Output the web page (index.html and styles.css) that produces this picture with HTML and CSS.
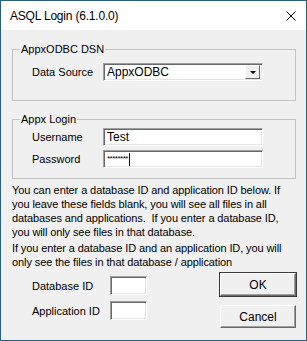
FILE: index.html
```html
<!DOCTYPE html>
<html lang="en">
<head>
  <meta charset="UTF-8" />
  <title>ASQL Login (6.1.0.0)</title>
  <link rel="stylesheet" href="styles.css">
</head>
<body>

  <div class="window">
    <!-- Title Bar -->
    <div class="titlebar">
      <span class="title">ASQL Login (6.1.0.0)</span>
      <svg class="close" width="10" height="10" viewBox="0 0 10 10">
        <path d="M0.5 0.5 L9.5 9.5 M9.5 0.5 L0.5 9.5" stroke="#000" stroke-width="1" fill="none"/>
      </svg>
    </div>

    <div class="content">
      <!-- DSN -->
      <fieldset class="group dsn">
        <legend>AppxODBC DSN</legend>
        <div class="row">
          <span class="label">Data Source</span>
          <div class="field select">
            <span class="value">AppxODBC</span>
            <span class="drop-btn"><span class="arrow"></span></span>
          </div>
        </div>
      </fieldset>

      <!-- Login -->
      <fieldset class="group login">
        <legend>Appx Login</legend>
        <div class="row">
          <span class="label">Username</span>
          <div class="field text"><span class="value">Test</span></div>
        </div>
        <div class="row">
          <span class="label">Password</span>
          <div class="field text"><span class="value stars">********</span><span class="caret"></span></div>
        </div>
      </fieldset>

      <p class="info first">You can enter a database ID and application ID below. If you leave these fields blank, you will see all files in all databases and applications.&nbsp; If you enter a database ID, you will only see files in that database.</p>
      <p class="info">If you enter a database ID and an application ID, you will only see the files in that database / application</p>

      <div class="bottom">
        <div class="ids">
          <div class="row">
            <span class="label wide">Database ID</span>
            <div class="field small"></div>
          </div>
          <div class="row">
            <span class="label wide">Application ID</span>
            <div class="field small"></div>
          </div>
        </div>
        <div class="buttons">
          <button class="btn default">OK</button>
          <button class="btn">Cancel</button>
        </div>
      </div>
    </div>
  </div>

</body>
</html>
```
FILE: styles.css
```css
* {
  box-sizing: border-box;
}

body {
  margin: 0;
  padding: 0;
  font-family: 'Liberation Sans', Arial, sans-serif;
  font-size: 11px;
  color: #000;
  background: #f0f0f0;
}

.window {
  width: 307px;
  height: 341px;
  border: 1px solid #2c5f7e;
  background: #f0f0f0;
  display: flex;
  flex-direction: column;
}

/* Title Bar */
.titlebar {
  height: 29px;
  background: #fff;
  display: flex;
  align-items: center;
  padding: 0 10px 0 9px;
}

.title {
  font-size: 12px;
  letter-spacing: -0.2px;
  flex: 1;
}

.close {
  display: block;
  margin-top: 1px;
}

/* Content */
.content {
  padding: 0 10px 0 11px;
}

.group {
  margin: 0;
  border: 1px solid #c4c4c4;
  padding: 0;
}

.group legend {
  margin-left: 7px;
  padding: 0 1px;
  line-height: 14px;
}

.group .row {
  padding-left: 19px;
}

.dsn {
  margin-top: 12px;
  padding-top: 7px;
  padding-bottom: 19px;
}

.login {
  margin-top: 11px;
  padding-top: 2px;
  padding-bottom: 10px;
  display: flex;
  flex-direction: column;
  gap: 4px;
}

.row {
  display: flex;
  align-items: center;
}

.label {
  width: 71px;
  flex-shrink: 0;
}

.label.wide {
  width: 78px;
}

/* Sunken fields */
.field {
  background: #fff;
  height: 18px;
  border-top: 1px solid #a0a0a0;
  border-left: 1px solid #a0a0a0;
  border-bottom: 1px solid #fff;
  border-right: 1px solid #fff;
  box-shadow: inset 1px 1px 0 #696969, inset -1px -1px 0 #e3e3e3;
  display: flex;
  align-items: center;
  padding-left: 3px;
}

.field.select,
.field.text {
  width: 160px;
}

.field.small {
  width: 37px;
  height: 19px;
}

.select .value {
  flex: 1;
  font-size: 12px;
}

.drop-btn {
  width: 15px;
  height: 14px;
  margin-right: 2px;
  background: #f0f0f0;
  border-top: 1px solid #fff;
  border-left: 1px solid #fff;
  border-bottom: 1px solid #696969;
  border-right: 1px solid #696969;
  display: flex;
  align-items: center;
  justify-content: center;
}

.arrow {
  width: 0;
  height: 0;
  border-left: 3px solid transparent;
  border-right: 3px solid transparent;
  border-top: 3px solid #000;
}

.text .value {
  font-size: 12px;
}

.stars {
  font-size: 8px !important;
  letter-spacing: -0.5px;
  margin-top: -2px;
}

.caret {
  width: 1px;
  height: 13px;
  background: #000;
  margin-left: 1px;
}

/* Info text */
.info {
  margin: 2px 0 0 0;
  line-height: 14px;
  letter-spacing: -0.1px;
}

.info.first {
  margin-top: 4px;
}

/* Bottom */
.bottom {
  display: flex;
  margin-top: 4px;
}

.ids {
  padding: 3px 0 0 20px;
  display: flex;
  flex-direction: column;
  gap: 6px;
}

.buttons {
  margin-left: auto;
  display: flex;
  flex-direction: column;
  gap: 9px;
}

.btn {
  width: 76px;
  height: 23px;
  font-family: 'Liberation Sans', Arial, sans-serif;
  font-size: 12px;
  color: #000;
  background: #f0f0f0;
  padding: 0;
  border-top: 1px solid #fff;
  border-left: 1px solid #fff;
  border-bottom: 1px solid #696969;
  border-right: 1px solid #696969;
  box-shadow: inset -1px -1px 0 #a0a0a0;
}

.btn.default {
  outline: 1px solid #3c3c3c;
}
```
